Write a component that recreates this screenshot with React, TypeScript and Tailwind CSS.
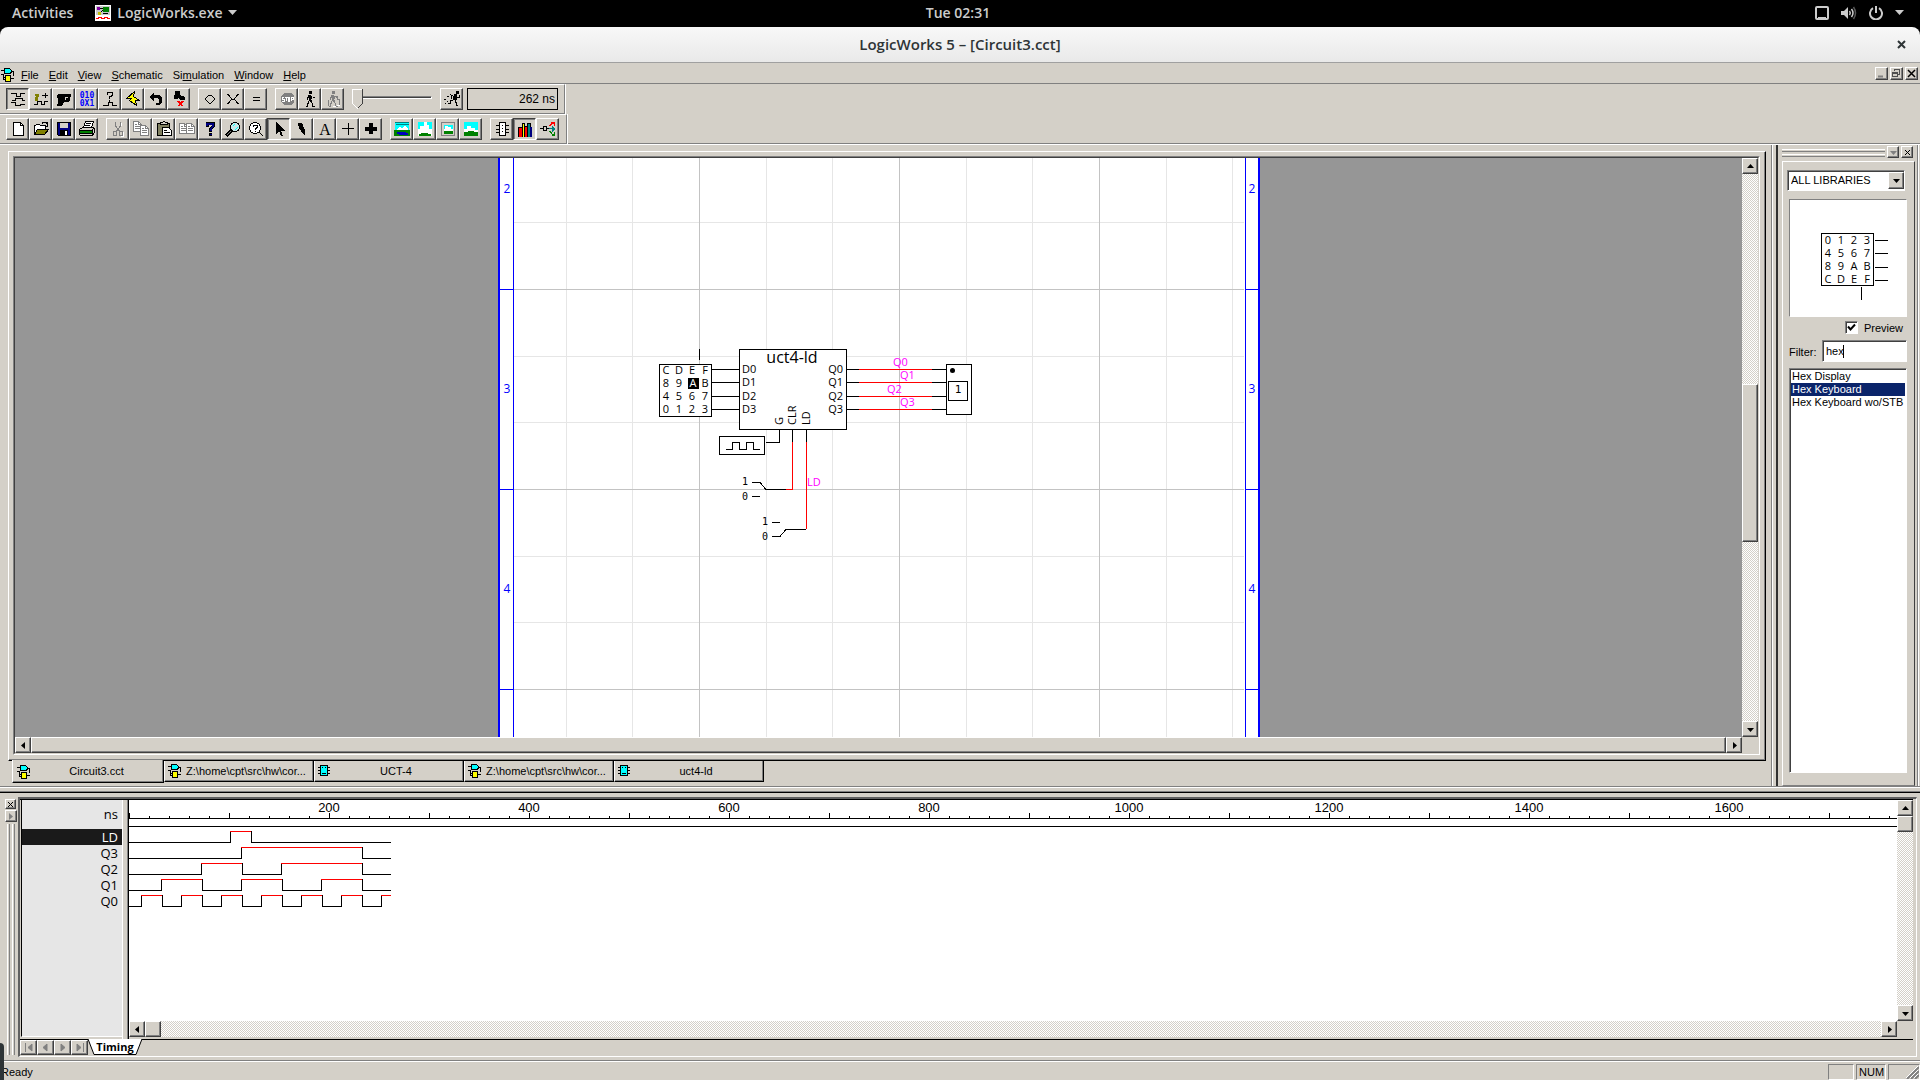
import React, { useState } from "react";

const UI = "font-['Liberation_Sans',Arial,sans-serif] text-[11px] leading-[13px]";
const RAISED =
  "border border-t-white border-l-white border-r-[#404040] border-b-[#404040] shadow-[inset_-1px_-1px_0_#808080] bg-[#d4d0c8]";
const PRESSED =
  "border border-t-[#404040] border-l-[#404040] border-r-white border-b-white shadow-[inset_1px_1px_0_#808080] bg-[#d4d0c8]";
const TRACK = "bg-[repeating-conic-gradient(#ffffff_0_25%,#d4d0c8_0_50%)] bg-[length:2px_2px]";

type Glyph = { name: string; art: React.ReactNode; on?: boolean };

const G = "#808080";
const ln = (d: string, stroke = "#000", w = 1) => <path d={d} stroke={stroke} strokeWidth={w} fill="none" />;
const fl = (d: string, fill = "#000", stroke = "none") => <path d={d} fill={fill} stroke={stroke} />;

const walker = (c: string) => (
  <>
    {fl("M7 0h3v3h-3z M7 4h2v6h-2z M6 4h1v3h-1z M9 5h1v3h-1z", c)}
    {ln("M5.500 6v3 M10.500 6.500h2 M6.500 10v3 M5.500 12v3.500h-2 M9.500 9v3 M10.500 12v3.500h2 M8.500 9v2", c)}
  </>
);

const page = (x: number, y: number, s: string) => (
  <>
    {fl(`M${x + 0.5} ${y + 0.5}h5l3 3v7h-8z`, "#fff", s)}
    {ln(`M${x + 5.5} ${y + 0.5}v3h3 M${x + 2} ${y + 3.5}h2 M${x + 2} ${y + 5.5}h5 M${x + 2} ${y + 7.5}h5`, s)}
  </>
);

const scenery = (kind: number) => (
  <>
    {fl("M1 1h14v14H1z", "#00ffff")}
    {kind === 0 && (
      <>
        {ln("M1 1.5h14 M2 3.5h13", "#008080")}
        {fl("M3 8l3-2 2 1 3-2 3 3v2H3z", "#fff")}
        {fl("M0 9h16v6H0z", "#008000")}
        {fl("M3 11h9v1h2v2H5v-1H3z", "#0000c0")}
      </>
    )}
    {kind === 1 && (
      <>
        {fl("M7 1h3v3h2v4h3v5H1V8h2V5h4z", "#fff")}
        {fl("M1 13h14v2H1z", "#fff")}
        {fl("M2 15v-2h2v-1h7v1h3v2z", "#008000")}
      </>
    )}
    {kind === 2 && (
      <>
        {fl("M3 10V8h2V5h3v1h3v2h2v2H3z", "#fff")}
        {fl("M3 10h10v3H3z", "#008000")}
        {ln("M2 2h12v12h-12z", "#d4d0c8", 3)}
        {ln("M1.5 1.5h13v13h-13z", "#808080", 1)}
      </>
    )}
    {kind === 3 && (
      <>
        {fl("M1 11V8h3V5h4v2h4v2h3v2H1z", "#fff")}
        {fl("M1 11h4v-1h6v1h4v4H1z", "#008000")}
      </>
    )}
  </>
);

const bits = (y: number, s: string) => (
  <text x="8" y={y} textAnchor="middle" fontFamily="DejaVu Sans Mono, monospace" fontWeight="bold" fontSize="8" fill="#0000ff">
    {s}
  </text>
);

const simGroups: Glyph[][] = [
  [
    { name: "Timing", on: true, art: ln("M1 2.5h5v3h4v-3h5 M2 9.5h3v-2h7v2h3 M1 11.5h4v3h5v-1h5") },
    {
      name: "Trace",
      art: (
        <>
          {fl("M2 3h4v3h-1v4h-3V6h1z", "#808000")}
          {ln("M9 4.5h6 M12.5 2v5 M1 13.5h3v-3h4v3h3v-3h4")}
        </>
      ),
    },
    { name: "Probe", art: fl("M1 4l1-1h13v3h-1v4l-2 1H8l-2 4H1l1-4V7H1z M9 6v3h1V7h2V6z") },
    { name: "Values", art: <>{bits(7, "010")}{bits(15, "0X1")}</> },
    { name: "Unknown", art: <>{ln("M5.500 3.500V1.500h5v3h-1v1h-2v2.500 M7.500 9v2")}{ln("M1 14.500h5v-3h4v3h5")}</> },
    { name: "Power", art: fl("M9.500 0.500L1.500 7.500H6.500L4.500 9.500L11.500 14.500L10.500 9.500H14.500L8.500 5.500z", "#ffff00", "#000") },
    { name: "Undo step", art: <>{fl("M1 6l5-5v3h5l3 3v4l-3 3H8v-2h3V8L9 7H6v4z")}</> },
    { name: "Reset", art: <>{fl("M4 0h5v4l5 2v3H9L7 7v1H3z")}{ln("M6.500 10l5 5.500 M11.500 10l-5 5.500", "#ff0000", 1)}{ln("M7.500 10l5 5.500 M12.500 10l-5 5.500", "#ff0000", 1)}</> },
  ],
  [
    { name: "Expand", art: ln("M3 8l4-4h2l4 4-4 4H7z", "#000", 1) },
    { name: "Compress", art: ln("M2 3.500h1L7 8H9L13 3.500h1 M2 12.500h1L7 8 M9 8l4 4.500h1", "#000", 1) },
    { name: "Equal", art: ln("M5 6.500h7 M5 9.500h7") },
  ],
  [
    {
      name: "Stop",
      art: (
        <>
          {fl("M5 2h7l3 3v6l-3 3H5l-3-3V5z", G)}
          {ln("M3 6.500h2 M3.500 6v2h1.500v2H3 M6 6.500h3 M7.500 6v4 M9.500 6v4h1V6z M12.500 10V6.500h1.500v1.500h-1", "#fff")}
        </>
      ),
    },
    { name: "Run", art: walker("#000") },
    { name: "Step", art: <>{walker(G)}{ln("M9 5.500h3v3h2v5 M3.500 9v6", G)}{ln("M8 15.500h3 M12 14.500h3", "#fff")}</> },
  ],
];

const speed: Glyph = {
  name: "Full speed",
  art: (
    <>
      {fl("M12 0h3v3h-3z M10 3h3v6H9V5h1z")}
      {ln("M9 4.500H7v3 M13 6.500h2V4 M9 9.500H6.500v3H4 M11.500 9v2h1v3h1.500")}
      {ln("M0 8.500h2 M3 5.500h2 M3 10.500h1 M1 12.500h1 M6 3.500h1")}
    </>
  ),
};

const fileGroups: Glyph[][] = [
  [
    { name: "New", art: <>{fl("M3.500 1.500h7l3 3v10h-10z", "#fff", "#000")}{ln("M10.500 1.500v3h3")}</> },
    {
      name: "Open",
      art: (
        <>
          {fl("M1.500 13.500v-9h1l1-1h3l1 1h5v3", "#fff", "#000")}
          {fl("M1.500 13.500l3-5h11l-4 5z", "#808000", "#000")}
          {ln("M9 2.500l1-1h3l1.500 2 M14.500 1v4h-3")}
        </>
      ),
    },
    {
      name: "Save",
      art: (
        <>
          {fl("M1.500 1.500h13v13h-12l-1-1z", "#000080", "#000")}
          {fl("M4 2h8v5H4z", "#d4d0c8")}
          {fl("M4 9h8v5H4z", "#000")}
          {fl("M9 10h2v4H9z", "#fff")}
        </>
      ),
    },
    {
      name: "Print",
      art: (
        <>
          {fl("M4.500 6.500l2-6h8l-2 6z", "#fff", "#000")}
          {ln("M7 2.500h5 M6 4.500h5")}
          {fl("M0.500 8.500l3-2h11l1 1v4l-2 3H1.500l-1-1z", "#d4d0c8", "#000")}
          {fl("M1 10h12v2H1z", "#008000")}
          {ln("M1 9.500h12v5 M1 12.500h12 M13 8.500l2-1")}
        </>
      ),
    },
  ],
  [
    { name: "Cut", art: <>{ln("M5.500 1v4l4 5 M10.500 1v4l-4 5", G)}{ln("M3.500 10.500h3v4h-3z M9.500 10.500h3v4h-3z", G)}{ln("M11.500 2v3 M13.500 11v4.500h-3", "#fff")}</> },
    { name: "Copy", art: <>{page(0, 0, G)}{page(7, 4, G)}</> },
    {
      name: "Paste",
      art: (
        <>
          {fl("M1.500 2.500h12v12h-12z", "#808060", "#000")}
          {fl("M4.500 3.500v-2h2l1-1h1l1 1h2v2z", "#d4d0c8", "#000")}
          {fl("M6.500 6.500h6l3 3v5h-9z", "#fff", "#000")}
          {ln("M8 9.500h3 M8 11.500h6")}
        </>
      ),
    },
    { name: "Duplicate", art: <>{page(0, 2, G)}{page(7, 2, G)}</> },
    { name: "Help", art: <>{ln("M5 6V2.500h6v3L8.500 8v3 M8.500 12v3", "#000", 3)}{ln("M5 5V2.500h6v3L8.500 8v2 M8.500 13v1", "#000080", 2)}</> },
    { name: "Zoom", art: <>{ln("M7 9l-6 6", "#000", 3)}{ln("M7 9l-5 5", "#808080", 1)}<circle cx="10" cy="6" r="4.500" fill="#c8e8e8" stroke="#000" />{ln("M8 5l2-2 M10 9l3-3", "#00ffff")}</> },
    { name: "Zoom query", art: <><circle cx="7" cy="7" r="5.500" fill="#fff" stroke="#000" />{ln("M11 11l4 4")}{ln("M5 6V4.500h4v2L7.500 8v1 M7.500 10v1", "#000", 1)}</> },
    { name: "Point", on: true, art: fl("M5 1v12l3-3 2 5h2l-2-5h4z") },
    { name: "Draw", art: <>{fl("M4 2h4l3 7v5h-1L5 7z")}</> },
    { name: "Text", art: <text x="8" y="14" textAnchor="middle" fontFamily="Liberation Serif" fontSize="16" fill="#000">A</text> },
    { name: "Signal", art: ln("M2 7.500h12 M8.500 2v12") },
    { name: "Bus", art: ln("M2 8h12 M8 2v11", "#000", 4) },
  ],
  [
    { name: "View back", art: scenery(0) },
    { name: "View near", art: scenery(1) },
    { name: "View fit", art: scenery(2) },
    { name: "View far", art: scenery(3) },
  ],
  [
    { name: "Device", art: <>{fl("M5.500 1.500h6v13h-6z", "#fff", "#000")}{ln("M2 4.500h3 M2 8.500h3 M2 11.500h3 M12 4.500h3 M12 8.500h3 M12 11.500h3")}{ln("M8.500 4v1 M8.500 7v1 M8.500 10v1")}</> },
    {
      name: "Parts",
      on: true,
      art: (
        <>
          {fl("M1 6h4v10H1z", "#ff0000", "#000")}
          {fl("M5 2h2v14H5z", "#ffff00", "#000")}
          {fl("M7 5h3v11H7z", "#ff0000", "#000")}
          {fl("M10 2h3v14h-3z", "#008080", "#000")}
          {fl("M13 6h2v10h-2z", "#000080")}
        </>
      ),
    },
    {
      name: "Hierarchy",
      art: (
        <>
          {ln("M0 7.500h3 M3.500 5.500h3v4h-3z M7 7.500h2")}
          {ln("M9 4.500h1v-1h1v-1h1 M11 1.500h3.500v3", "#ff0000")}
          {fl("M12 1h3v3h-1v-1h-2z", "#ff0000")}
          {ln("M9 7.500h5 M12.500 5v5", "#008080")}
          {fl("M12 5l3 2v1l-3 3z", "#008080")}
          {ln("M9 10.500h1v1h1v1h1", "#008000")}
          {fl("M12 13h2v-2h1v4h-3z", "#008000")}
        </>
      ),
    },
  ],
];

function ToolButton({ g }: { g: Glyph }) {
  return (
    <button
      aria-label={g.name}
      className={"flex h-[22px] w-[23px] items-center justify-center " + (g.on ? PRESSED : RAISED)}
    >
      <svg width="16" height="16" viewBox="0 0 16 16" shapeRendering="crispEdges">
        {g.art}
      </svg>
    </button>
  );
}

function Tri({ dir, color = "#000" }: { dir: "up" | "down" | "left" | "right"; color?: string }) {
  const d = { up: "M1 6h7L4.500 2z", down: "M1 3h7L4.500 7z", left: "M6 1v7L2 4.500z", right: "M3 1v7l4-3.500z" }[dir];
  return (
    <svg width="9" height="9" viewBox="0 0 9 9">
      <path d={d} fill={color} />
    </svg>
  );
}

function ArrowButton({ dir, label }: { dir: "up" | "down" | "left" | "right"; label: string }) {
  return (
    <button aria-label={label} className={"flex size-4 shrink-0 items-center justify-center " + RAISED}>
      <Tri dir={dir} />
    </button>
  );
}

function CircuitIcon() {
  return (
    <svg width="14" height="14" viewBox="0 0 14 14" shapeRendering="crispEdges" className="shrink-0">
      {ln("M1 2.500h4 M1 6.500h3 M3.500 6v5 M10 3.500h3.500v4 M3 9.500h3 M3 11.500h3 M11 10.500h3")}
      {fl("M4.500 0.500h5l2 2v2l-2 1h-5z", "#00ffff", "#000")}
      {fl("M5.500 7.500h5v6h-5z", "#ffff00", "#000")}
    </svg>
  );
}

function ChipIcon() {
  return (
    <svg width="14" height="14" viewBox="0 0 14 14" shapeRendering="crispEdges" className="shrink-0">
      {ln("M1 3.500h12 M1 6.500h12 M1 9.500h12")}
      {fl("M3.500 1.500h7v10h-7z", "#00ffff", "#000")}
      {ln("M5 3.500h1 M8 3.500h1 M5 9.500h4")}
    </svg>
  );
}

function TopBar() {
  return (
    <header className="flex h-[27px] shrink-0 items-center bg-black pr-4 pb-0.5 pl-3 font-['Open_Sans',sans-serif] text-sm font-semibold text-[#cccccc]">
      <div className="flex flex-1 items-center gap-5">
        <button>Activities</button>
        <button className="flex items-center gap-1.5 pl-0.5">
          <svg width="16" height="16" viewBox="0 0 16 16" shapeRendering="crispEdges">
            <path d="M0 0h16v16H0z" fill="#fff" />
            <path d="M1 1h14v9H1z" fill="#c8c8c8" />
            <path d="M8 2h6v5H8z" fill="#008000" />
            <path d="M2 2h3v3H2z" fill="#8000a0" />
            <path d="M3 7h3v3H3z" fill="#c0c000" />
            <path d="M5 3.500h3 M6 7l2-2 M8 8.500h5" stroke="#000" />
            <path d="M1 13.500h2v-1h3v1h3v-1h3v1h3" stroke="#ff0000" fill="none" />
          </svg>
          LogicWorks.exe
          <svg width="9" height="5" viewBox="0 0 9 5"><path d="M0 0h9L4.500 5z" fill="#ccc" /></svg>
        </button>
      </div>
      <button>Tue 02:31</button>
      <div className="flex flex-1 items-center justify-end gap-3">
        <svg width="14" height="14" viewBox="0 0 14 14" fill="none" stroke="#ccc" strokeWidth="2">
          <rect x="1" y="1" width="12" height="12" rx="1" />
          <path d="M3 12.500h8" strokeWidth="3" />
        </svg>
        <svg width="16" height="14" viewBox="0 0 16 14" fill="none" stroke="#ccc" strokeWidth="1.500">
          <path d="M0 5h3l4-4v12L3 9H0z" fill="#ccc" stroke="none" />
          <path d="M8.500 5q1.500 2 0 4 M10.500 3q3 4 0 8" />
          <path d="M12.500 1q4 6 0 12" stroke="#555" />
        </svg>
        <svg width="14" height="14" viewBox="0 0 14 14" fill="none" stroke="#ccc" strokeWidth="2">
          <path d="M4 2.200a6 6 0 1 0 6 0 M7 0v7" />
        </svg>
        <svg width="9" height="5" viewBox="0 0 9 5"><path d="M0 0h9L4.500 5z" fill="#ccc" /></svg>
      </div>
    </header>
  );
}

function TitleBar() {
  return (
    <div className="shrink-0 bg-black">
      <div className="flex h-9 items-center rounded-t-lg border-b border-[#a0a0a0] bg-linear-to-b from-[#f8f8f8] to-[#e9e9e9] px-3.5 font-['Open_Sans',sans-serif] text-[15px] font-semibold text-[#2e3436]">
        <span className="flex-1" />
        <h1>LogicWorks 5 – [Circuit3.cct]</h1>
        <div className="flex flex-1 justify-end">
          <button aria-label="Close window">
            <svg width="9" height="9" viewBox="0 0 9 9"><path d="M1 1l7 7 M8 1l-7 7" stroke="#2e3436" strokeWidth="2" /></svg>
          </button>
        </div>
      </div>
    </div>
  );
}

const menus = ["File", "Edit", "View", "Schematic", "Simulation", "Window", "Help"];

function MenuBar() {
  return (
    <nav className="flex h-[21px] shrink-0 items-center border-b border-[#808080] pr-0.5 pt-1">
      <CircuitIcon />
      <div className="ml-[7px] flex flex-1 gap-2.5">
        {menus.map((m) => {
          const at = m === "Simulation" ? 2 : 0;
          return (
            <button key={m}>
              {m.slice(0, at)}
              <u>{m[at]}</u>
              {m.slice(at + 1)}
            </button>
          );
        })}
      </div>
      <div className="flex gap-0.5 pb-1">
        <button aria-label="Minimize" className={"size-[13px] " + RAISED}>
          <svg width="11" height="11" viewBox="0 0 11 11"><path d="M2 8.500h5" stroke="#808080" strokeWidth="2" /></svg>
        </button>
        <button aria-label="Restore" className={"size-[13px] " + RAISED}>
          <svg width="11" height="11" viewBox="0 0 11 11" fill="none" stroke="#505050" shapeRendering="crispEdges">
            <path d="M3.500 3V1.500h5v5H7 M1.500 4.500h5v4h-5z M2 5.500h4" />
          </svg>
        </button>
        <button aria-label="Close" className={"size-[13px] " + RAISED}>
          <svg width="11" height="11" viewBox="0 0 11 11"><path d="M2 2l7 7 M9 2l-7 7" stroke="#000" strokeWidth="1.500" /></svg>
        </button>
      </div>
    </nav>
  );
}

function Group({ items }: { items: Glyph[] }) {
  return (
    <div className="flex">
      {items.map((g) => (
        <ToolButton key={g.name} g={g} />
      ))}
    </div>
  );
}

const BAR = "flex h-[30px] w-max gap-2 border-t border-t-white border-b border-b-[#808080] border-r border-r-[#808080] pt-[3px] pl-1.5 shadow-[1px_0_0_#ffffff]";

function Toolbars() {
  return (
    <div className="shrink-0">
      <div className={BAR + " pr-1.5"}>
        {simGroups.map((g, i) => (
          <Group key={i} items={g} />
        ))}
        <div className="flex h-[22px] w-20 items-center">
          <div className="relative h-5 w-full">
            <div className="absolute inset-x-0 top-[7px] h-[3px] border border-t-[#808080] border-l-[#808080] border-r-white border-b-white bg-[#404040]" />
            <svg width="12" height="21" viewBox="0 0 12 21" className="absolute top-0 left-0" shapeRendering="crispEdges">
              <path d="M0.500 0.500h10v14l-5 5-5-5z" fill="#d4d0c8" stroke="#fff" />
              <path d="M10.500 0v14.500l-5 5" stroke="#404040" fill="none" />
            </svg>
            <input type="range" aria-label="Simulation speed" defaultValue={0} className="absolute inset-0 w-full opacity-0" />
          </div>
        </div>
        <ToolButton g={speed} />
        <output className="-ml-1 flex h-[22px] w-[91px] items-center justify-end border border-black pr-0.5 text-xs">262 ns</output>
      </div>
      <div className="border-b border-[#808080]">
        <div className={BAR + " -mb-px pr-[7px]"}>
          {fileGroups.map((g, i) => (
            <Group key={i} items={g} />
          ))}
        </div>
      </div>
    </div>
  );
}

type TextProps = { x: number; y: number; s: string; fill?: string; size?: number; anchor?: "start" | "middle" | "end"; font?: string };

function T({ x, y, s, fill = "#000", size = 11, anchor = "start", font = "Open Sans, sans-serif" }: TextProps) {
  return (
    <text x={x} y={y} fill={fill} fontSize={size} textAnchor={anchor} fontFamily={font}>
      {s}
    </text>
  );
}

function Keys({ x, y, rows, hot }: { x: number; y: number; rows: string[]; hot?: string }) {
  return (
    <>
      {rows.map((r, j) =>
        r.split("").map((c, i) => (
          <g key={c}>
            {c === hot && <rect x={x + i * 13 - 4} y={y + j * 13 - 9} width="11" height="11" fill="#000" />}
            <T x={x + i * 13 + (c === hot ? 1 : 0)} y={y + j * 13} s={c} anchor="middle" fill={c === hot ? "#fff" : "#000"} />
          </g>
        )),
      )}
    </>
  );
}

function Schematic() {
  const pink = "#ff00ff";
  const mono = { fontFamily: "DejaVu Sans Mono, monospace", fontSize: 10 };
  const pinY = [369, 382, 396, 409];
  return (
    <svg width="762" height="1000" viewBox="498 158 762 1000" className="shrink-0 bg-white" aria-label="Circuit schematic">
      <g shapeRendering="crispEdges" fill="none">
        {[566, 632, 766, 832, 966, 1032, 1166, 1232].map((x) => <path key={x} d={`M${x}.5 158v1000`} stroke="#e6e6e6" />)}
        {[222, 356, 422, 556, 622, 756].map((y) => <path key={y} d={`M514 ${y}.5h730`} stroke="#e6e6e6" />)}
        {[699, 899, 1099].map((x) => <path key={x} d={`M${x}.5 158v1000`} stroke="#c3c3c3" />)}
        {[289, 489, 689].map((y) => <path key={y} d={`M514 ${y}.5h730`} stroke="#c3c3c3" />)}
        <path d="M499 158v1000 M1259 158v1000" stroke="#0000ff" strokeWidth="2" />
        <path d="M513.500 158v1000 M1245.500 158v1000" stroke="#0000ff" />
        {[289, 489, 689].map((y) => <path key={y} d={`M499 ${y}.5h14 M1245 ${y}.5h14`} stroke="#0000ff" />)}
        <path d="M659.500 364.500h52v52h-52z M739.500 349.500h107v80h-107z M719.500 436.500h45v18h-45z M946.500 364.500h25v50h-25z" stroke="#000" fill="#fff" />
        <path d="M948.500 381.500h19v19h-19z" stroke="#000" />
        <path d="M699.500 349v11" stroke="#000" />
        {pinY.map((y) => (
          <g key={y}>
            <path d={`M712 ${y}.5h27 M847 ${y}.5h12 M932 ${y}.5h14`} stroke="#000" />
            <path d={`M859 ${y}.5h73`} stroke="#ff0000" />
          </g>
        ))}
        <path d="M779.500 430v12.500H766 M792.500 430v12 M806.500 430v12 M726 449.500h6.500v-7h7v7h7v-7h7v7h6.500 M752 482.500h8l6 7h20 M752 496.500h8 M772 522.500h8 M772 536.500h8l6-7h20" stroke="#000" />
        <path d="M792.500 442v47.500H786 M806.500 442v87" stroke="#ff0000" />
      </g>
      <circle cx="952.500" cy="370.500" r="2.500" />
      {["2", "3", "4"].map((n, i) => (
        <g key={n}>
          <T x={507} y={193 + i * 200} s={n} fill="#0000ff" anchor="middle" size={12} />
          <T x={1252} y={193 + i * 200} s={n} fill="#0000ff" anchor="middle" size={12} />
        </g>
      ))}
      <Keys x={666} y={374} rows={["CDEF", "89AB", "4567", "0123"]} hot="A" />
      <T x={792} y={363} s="uct4-ld" size={16} anchor="middle" />
      {pinY.map((y, i) => (
        <g key={y}>
          <T x={742} y={y + 4} s={"D" + i} />
          <T x={843} y={y + 4} s={"Q" + i} anchor="end" />
        </g>
      ))}
      <g transform="translate(783 425) rotate(-90)"><T x={0} y={0} s="G" /></g>
      <g transform="translate(796 425) rotate(-90)"><T x={0} y={0} s="CLR" /></g>
      <g transform="translate(810 425) rotate(-90)"><T x={0} y={0} s="LD" /></g>
      <T x={893} y={366} s="Q0" fill={pink} />
      <T x={900} y={379} s="Q1" fill={pink} />
      <T x={887} y={393} s="Q2" fill={pink} />
      <T x={900} y={406} s="Q3" fill={pink} />
      <T x={807} y={486} s="LD" fill={pink} />
      <text x="742" y="485" {...mono}>1</text>
      <text x="742" y="500" {...mono}>0</text>
      <text x="762" y="525" {...mono}>1</text>
      <text x="762" y="540" {...mono}>0</text>
      <text x="958" y="393" textAnchor="middle" {...mono} fontSize={11}>1</text>
    </svg>
  );
}

const docs = [
  { name: "Z:\\home\\cpt\\src\\hw\\cor...", icon: <CircuitIcon /> },
  { name: "UCT-4", icon: <ChipIcon /> },
  { name: "Z:\\home\\cpt\\src\\hw\\cor...", icon: <CircuitIcon /> },
  { name: "uct4-ld", icon: <ChipIcon /> },
];

function Workspace() {
  return (
    <section className="flex min-w-0 flex-1 flex-col border-r border-[#808080] pt-1.5 pr-[5px] pl-2">
      <div className="flex min-h-0 flex-1 flex-col border-t border-r border-b border-l border-t-white border-l-white border-r-black border-b-black pt-1 pr-[5px] pb-[5px] pl-1 shadow-[inset_-1px_-1px_0_#808080]">
        <div className="flex min-h-0 flex-1 flex-col border border-t-[#808080] border-l-[#808080] border-r-white border-b-white">
          <div className="flex min-h-0 flex-1 flex-col border border-t-[#404040] border-l-[#404040] border-r-[#d4d0c8] border-b-[#d4d0c8]">
            <div className="flex min-h-0 flex-1">
              <div className="flex flex-1 justify-center overflow-hidden bg-[#969696]">
                <Schematic />
              </div>
              <div className={"flex w-4 flex-col " + TRACK}>
                <ArrowButton dir="up" label="Scroll up" />
                <div className="grow-[211]" />
                <div className={"h-[158px] " + RAISED} />
                <div className="grow-[179]" />
                <ArrowButton dir="down" label="Scroll down" />
              </div>
            </div>
            <div className="flex h-4">
              <ArrowButton dir="left" label="Scroll left" />
              <div className={"flex-1 " + RAISED} />
              <ArrowButton dir="right" label="Scroll right" />
              <div className="w-4" />
            </div>
          </div>
        </div>
      </div>
      <div className="flex h-[25px] items-start pl-1">
        <button className="relative -mt-px flex h-[23px] w-[152px] items-center border-r border-b border-l border-l-white border-r-black border-b-black bg-[#d4d0c8] pt-px pl-[3px] shadow-[inset_-1px_-1px_0_#808080]">
          <CircuitIcon />
          <span className="flex-1">Circuit3.cct</span>
        </button>
        {docs.map((d, i) => (
          <button key={i} className="flex h-[21px] w-[150px] items-center border-r border-b border-l border-l-white border-r-black border-b-black px-0.5 shadow-[inset_-1px_-1px_0_#808080]">
            {d.icon}
            <span className="flex-1 truncate">{d.name}</span>
          </button>
        ))}
      </div>
    </section>
  );
}

const parts = ["Hex Display", "Hex Keyboard", "Hex Keyboard wo/STB"];
const SUNK = "border border-t-[#808080] border-l-[#808080] border-r-white border-b-white shadow-[inset_1px_1px_0_#404040] bg-white";

function PartsPalette() {
  const [filter, setFilter] = useState("hex");
  const [chosen, setChosen] = useState("Hex Keyboard");
  return (
    <aside className="flex w-[148px] shrink-0 border-l border-white pr-0.5 pl-[3px]">
      <div className="flex flex-1 flex-col border-r border-l-2 border-r-[#808080] border-l-[#303030] pr-[2px] pl-1 shadow-[1px_0_0_#ffffff]">
        <div className="flex h-4 items-start gap-0.5 pt-px pr-0.5">
          <div className="flex flex-1 flex-col gap-0.5 pt-[3px]">
            <div className="h-[3px] border-t border-b border-t-white border-b-[#808080]" />
            <div className="h-[3px] border-t border-b border-t-white border-b-[#808080]" />
          </div>
          <button aria-label="Palette menu" className={"flex size-3 items-center justify-center " + RAISED}>
            <Tri dir="down" color="#808080" />
          </button>
          <button aria-label="Close palette" className={"flex size-3 items-center justify-center " + RAISED}>
            <svg width="7" height="7" viewBox="0 0 7 7"><path d="M1 1l5 5 M6 1l-5 5" stroke="#000" /></svg>
          </button>
        </div>
        <div className="flex min-h-0 flex-1 flex-col border border-t-white border-l-white border-r-[#404040] border-b-[#808080] pt-2 pr-[7px] pb-3 pl-1.5">
          <label className={"relative mr-0.5 -ml-0.5 flex h-[21px] items-center " + SUNK}>
            <select aria-label="Library" className="w-full appearance-none bg-transparent pl-[3px] outline-none">
              <option>ALL LIBRARIES</option>
            </select>
            <span className={"pointer-events-none absolute inset-y-px right-0 flex w-4 items-center justify-center " + RAISED}>
              <Tri dir="down" />
            </span>
          </label>
          <div className="mt-2 h-[118px] border border-t-[#808080] border-l-[#808080] border-r-white border-b-white bg-white">
            <svg width="115" height="116" viewBox="1790 200 115 116" aria-label="Part preview">
              <path d="M1821.500 233.500h52v52h-52z M1875 240.500h13 M1875 253.500h13 M1875 267.500h13 M1875 280.500h13 M1861.500 287v13" stroke="#000" fill="none" shapeRendering="crispEdges" />
              <Keys x={1828} y={244} rows={["0123", "4567", "89AB", "CDEF"]} />
            </svg>
          </div>
          <label className="mt-1 flex h-[13px] items-center justify-end pr-1">
            <span className={"relative mr-1.5 size-[13px] " + SUNK}>
              <input type="checkbox" defaultChecked className="peer absolute inset-0 m-0 opacity-0" />
              <svg width="11" height="11" viewBox="0 0 11 11" className="hidden peer-checked:block"><path d="M2 4.500l2.500 3L9 2.500" stroke="#000" strokeWidth="2" fill="none" /></svg>
            </span>
            <span className="pt-0.5">Preview</span>
          </label>
          <div className="mt-1.5 flex h-[22px] items-center">
            <label htmlFor="part-filter" className="w-[33px] pt-0.5">Filter:</label>
            <div className={"relative flex h-full min-w-0 flex-1 items-center " + SUNK}>
              <input id="part-filter" value={filter} onChange={(e) => setFilter(e.target.value)} className="w-full bg-transparent pl-[3px] outline-none" />
              <span className="absolute top-1 left-5 h-[13px] w-px bg-black" />
            </div>
          </div>
          <ul role="listbox" aria-label="Parts" className={"mt-1.5 flex-1 overflow-hidden p-px " + SUNK}>
            {parts.map((p) => (
              <li key={p} role="option" aria-selected={p === chosen}>
                <button
                  onClick={() => setChosen(p)}
                  className={"block h-[13px] w-full pl-px text-left whitespace-nowrap " + (p === chosen ? "bg-[#0a246a] text-white" : "")}
                >
                  {p}
                </button>
              </li>
            ))}
          </ul>
        </div>
      </div>
    </aside>
  );
}

const traces: { name: string; edges: number[] }[] = [
  { name: "LD", edges: [101, 122] },
  { name: "Q3", edges: [112, 233] },
  { name: "Q2", edges: [72, 113, 152, 233] },
  { name: "Q1", edges: [32, 73, 112, 153, 192, 233] },
  { name: "Q0", edges: [12, 33, 52, 73, 92, 113, 132, 153, 172, 193, 212, 233, 252] },
];
const END = 262;

function Waves() {
  return (
    <svg className="block h-full w-full" shapeRendering="crispEdges" fill="none" aria-label="Timing waveforms">
      {Array.from({ length: 120 }, (_, i) => (
        <path key={i} d={`M${i * 20}.5 18v${i % 5 === 0 ? -5 : -2}`} stroke="#000" />
      ))}
      <line x1="0" x2="100%" y1="18.500" y2="18.500" stroke="#000" />
      <line x1="0" x2="100%" y1="26.500" y2="26.500" stroke="#000" />
      {[200, 400, 600, 800, 1000, 1200, 1400, 1600].map((n) => (
        <T key={n} x={n} y={12} s={String(n)} size={13} anchor="middle" font="Liberation Sans, sans-serif" />
      ))}
      {traces.map((t, r) => {
        const lo = 42 + r * 16;
        const hi = lo - 11;
        const pts = [0, ...t.edges, END];
        return (
          <g key={t.name}>
            {t.edges.map((x) => <path key={x} d={`M${x}.5 ${hi}v12`} stroke="#000" />)}
            {pts.slice(0, -1).map((x, i) => (
              <path key={x} d={`M${x} ${i % 2 ? hi : lo}.5H${pts[i + 1]}`} stroke={i % 2 ? "#ff0000" : "#000"} />
            ))}
          </g>
        );
      })}
    </svg>
  );
}

const nav = [
  { name: "First", d: "M3.500 2v9 M10 3v7l-4-3.500z" },
  { name: "Previous", d: "M8 3v7L4 6.500z" },
  { name: "Next", d: "M5 3v7l4-3.500z" },
  { name: "Last", d: "M10.500 2v9 M4 3v7l4-3.500z" },
];

function TimingDock() {
  return (
    <section className="flex h-[274px] shrink-0 flex-col border-t border-[#808080]">
      <div className="h-[5px] border-t border-b border-t-white border-b-[#808080]" />
      <div className="flex min-h-0 flex-1 border-t border-black pt-1 pr-[3px] pb-[3px]">
        <div className="flex w-[18px] shrink-0 flex-col items-center gap-px pt-0.5 pb-0.5 pl-[3px]">
          <button aria-label="Close timing" className={"flex h-2.5 w-[11px] items-center justify-center " + RAISED}>
            <svg width="7" height="7" viewBox="0 0 7 7"><path d="M1 1l5 5 M6 1l-5 5" stroke="#000" /></svg>
          </button>
          <button aria-label="Expand timing" className={"flex size-3 items-center justify-center " + RAISED}>
            <Tri dir="right" color="#808080" />
          </button>
          <div className="mt-px flex flex-1 gap-0.5">
            <div className="w-[3px] border-r border-l border-l-white border-r-[#808080]" />
            <div className="w-[3px] border-r border-l border-l-white border-r-[#808080]" />
          </div>
        </div>
        <div className="flex min-w-0 flex-1 flex-col border-t-2 border-r border-b border-l-2 border-t-[#606060] border-l-[#606060] border-r-white border-b-white pr-[3px]">
          <div className="flex min-h-0 flex-1 border-t border-black pl-px">
            <div className="mb-0.5 w-[101px] shrink-0 border-b border-l border-l-black border-b-white bg-[#e6e6e6] pt-1.5 text-right font-['Open_Sans',sans-serif] text-[13px] leading-4">
              <div className="pr-1 pb-[7px]">ns</div>
              {traces.map((t) => (
                <div key={t.name} className={"pr-1 " + (t.name === "LD" ? "bg-[#1a1a1a] text-white" : "")}>
                  {t.name}
                </div>
              ))}
            </div>
            <div className="w-1.5 shrink-0 border-r border-l border-l-white border-r-[#808080]" />
            <div className="flex min-w-0 flex-1 border-l border-black">
              <div className="flex min-w-0 flex-1 flex-col">
                <div className="min-h-0 flex-1 bg-white">
                  <Waves />
                </div>
                <div className={"mb-0.5 flex h-4 " + TRACK}>
                  <ArrowButton dir="left" label="Scroll timing left" />
                  <div className={"w-4 " + RAISED} />
                  <div className="flex-1" />
                  <ArrowButton dir="right" label="Scroll timing right" />
                </div>
              </div>
              <div className={"mb-[18px] flex w-4 flex-col " + TRACK}>
                <ArrowButton dir="up" label="Scroll timing up" />
                <div className={"h-4 " + RAISED} />
                <div className="flex-1" />
                <ArrowButton dir="down" label="Scroll timing down" />
              </div>
            </div>
          </div>
          <div className="flex h-[17px] items-start border-t border-black">
            {nav.map((n) => (
              <button key={n.name} aria-label={n.name} className={"flex h-[15px] w-[17px] items-center justify-center " + RAISED}>
                <svg width="13" height="13" viewBox="0 0 13 13"><path d={n.d} fill="#808080" stroke="#808080" strokeWidth="1" /></svg>
              </button>
            ))}
            <button className="relative -mt-px h-4 w-[54px] pb-px font-['Open_Sans',sans-serif] font-bold">
              <svg className="absolute inset-0" width="54" height="16" viewBox="0 0 54 16">
                <path d="M0 0h54l-6 15.500H6z" fill="#fff" />
                <path d="M0 0l6 15.500h42L54 0" fill="none" stroke="#000" />
              </svg>
              <span className="relative">Timing</span>
            </button>
          </div>
        </div>
      </div>
    </section>
  );
}

function StatusBar() {
  const cell = "h-4 border border-t-[#808080] border-l-[#808080] border-r-white border-b-white";
  return (
    <footer className="flex h-5 shrink-0 border-t border-[#808080] shadow-[inset_0_1px_0_#ffffff]">
      <span className="flex-1 pt-[5px] pl-px">Ready</span>
      <div className="flex gap-0.5 pt-[3px]">
        <div className={"w-[26px] " + cell} />
        <div className={"w-[30px] pt-px pl-0.5 " + cell}>NUM</div>
        <div className={"flex w-8 items-end justify-end " + cell}>
          <svg width="13" height="13" viewBox="0 0 13 13"><path d="M1 13L13 1 M5 13l8-8 M9 13l4-4" stroke="#808080" strokeWidth="2" /><path d="M0 12L12 0 M4 12l8-8 M8 12l4-4" stroke="#fff" /></svg>
        </div>
      </div>
    </footer>
  );
}

export default function App() {
  return (
    <div className={"relative flex h-screen flex-col overflow-hidden bg-[#d4d0c8] text-black " + UI}>
      <TopBar />
      <TitleBar />
      <MenuBar />
      <Toolbars />
      <main className="flex min-h-0 flex-1 border-t border-white">
        <Workspace />
        <PartsPalette />
      </main>
      <TimingDock />
      <StatusBar />
      <div className="absolute bottom-0 left-0 h-[37px] w-1 rounded-tr bg-[#2e3436]" />
    </div>
  );
}
